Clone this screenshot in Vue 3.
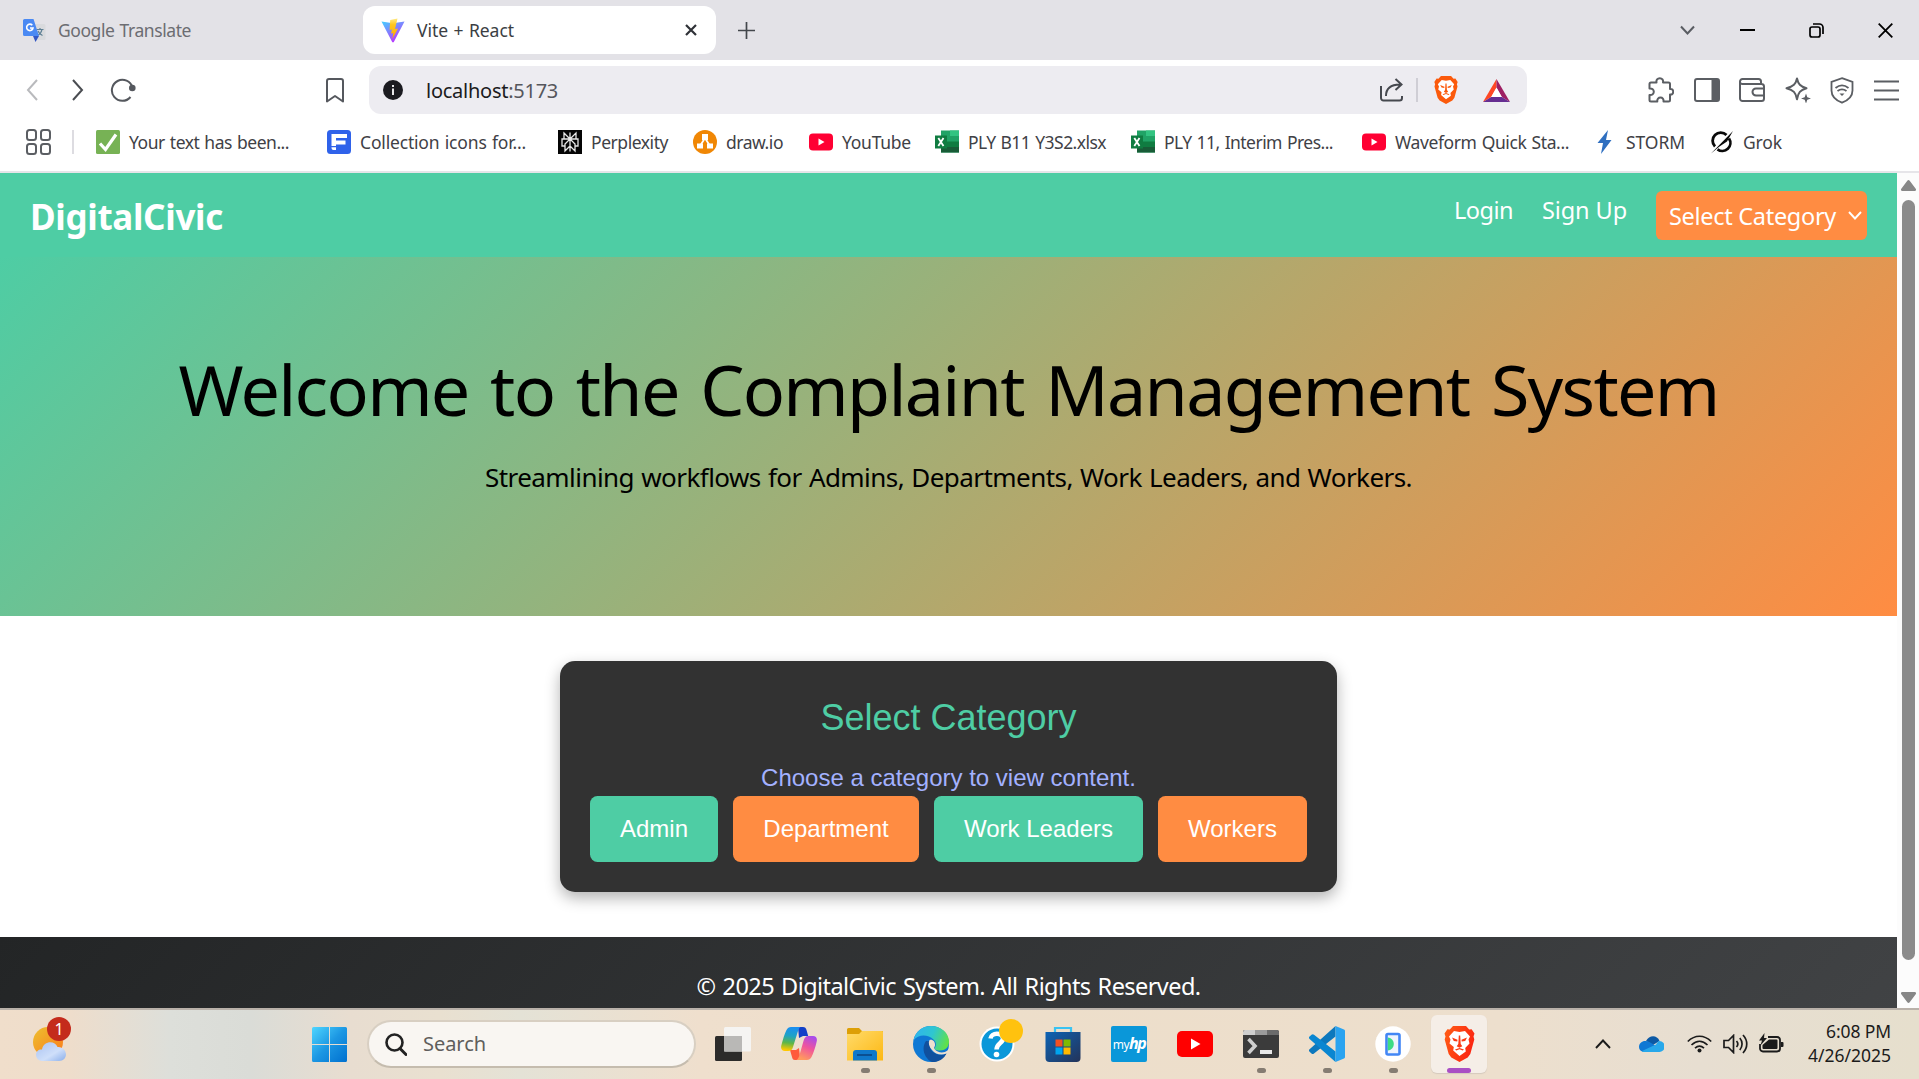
<script setup>
// Tracks a label so that it fills the given width in pixels.
const vFit = {
  mounted(el, { value }) {
    const natural = el.getBoundingClientRect().width
    const count = el.textContent.trim().length
    el.style.letterSpacing = `${(value - natural) / count}px`
  }
}

const bookmarks = [
  { icon: 'check', label: 'Your text has been...', text: 160, slot: 231 },
  { icon: 'flat', label: 'Collection icons for...', text: 166, slot: 231 },
  { icon: 'perplexity', label: 'Perplexity', text: 77, slot: 135 },
  { icon: 'draw', label: 'draw.io', text: 57, slot: 116 },
  { icon: 'youtube', label: 'YouTube', text: 69, slot: 126 },
  { icon: 'excel', label: 'PLY B11 Y3S2.xlsx', text: 138, slot: 196 },
  { icon: 'excel', label: 'PLY 11, Interim Pres...', text: 169, slot: 231 },
  { icon: 'youtube', label: 'Waveform Quick Sta...', text: 174, slot: 231 },
  { icon: 'storm', label: 'STORM', text: 59, slot: 117 },
  { icon: 'grok', label: 'Grok', text: 39, slot: 90 }
]

const categories = [
  { name: 'Admin', tone: 'green', width: 128 },
  { name: 'Department', tone: 'orange', width: 186 },
  { name: 'Work Leaders', tone: 'green', width: 209 },
  { name: 'Workers', tone: 'orange', width: 149 }
]

const apps = [
  { id: 'taskview' },
  { id: 'copilot' },
  { id: 'folder', running: true },
  { id: 'edge', running: true },
  { id: 'help' },
  { id: 'store' },
  { id: 'myhp' },
  { id: 'youtube' },
  { id: 'terminal', running: true },
  { id: 'vscode', running: true },
  { id: 'emulator', running: true },
  { id: 'brave', active: true }
]
</script>

<template>
  <div class="screen">
    <svg class="defs" width="0" height="0" aria-hidden="true">
      <defs>
        <linearGradient id="viteA" x1="0" y1="0" x2="0.6" y2="1">
          <stop offset="0" stop-color="#41d1ff" />
          <stop offset="1" stop-color="#bd34fe" />
        </linearGradient>
        <linearGradient id="viteB" x1="0" y1="0" x2="0" y2="1">
          <stop offset="0" stop-color="#ffea83" />
          <stop offset="0.3" stop-color="#ffc71c" />
          <stop offset="1" stop-color="#ffa800" />
        </linearGradient>
        <linearGradient id="sun" x1="0" y1="0" x2="1" y2="1">
          <stop offset="0" stop-color="#edc02f" />
          <stop offset="1" stop-color="#fb7a1c" />
        </linearGradient>
        <linearGradient id="cloud" x1="0" y1="0" x2="1" y2="1">
          <stop offset="0" stop-color="#a9c2f2" />
          <stop offset="0.6" stop-color="#cfdffa" />
          <stop offset="1" stop-color="#8aaeea" />
        </linearGradient>
        <linearGradient id="win" gradientUnits="userSpaceOnUse" x1="0" y1="0" x2="35" y2="35">
          <stop offset="0" stop-color="#4fd6ff" />
          <stop offset="0.5" stop-color="#1c97e3" />
          <stop offset="1" stop-color="#0070cf" />
        </linearGradient>
        <linearGradient id="copA" x1="0.3" y1="0" x2="0.2" y2="1">
          <stop offset="0" stop-color="#1b8ff0" />
          <stop offset="0.35" stop-color="#1fa3c4" />
          <stop offset="0.65" stop-color="#5fb648" />
          <stop offset="0.95" stop-color="#ffc800" />
        </linearGradient>
        <linearGradient id="copB" x1="0.8" y1="0" x2="0.4" y2="1">
          <stop offset="0" stop-color="#a44bf0" />
          <stop offset="0.5" stop-color="#f0559c" />
          <stop offset="1" stop-color="#ff9a5e" />
        </linearGradient>
        <linearGradient id="fold" x1="0" y1="0" x2="1" y2="1">
          <stop offset="0" stop-color="#ffdb6b" />
          <stop offset="1" stop-color="#fdb813" />
        </linearGradient>
        <linearGradient id="edgeA" x1="0" y1="0.3" x2="1" y2="0.6">
          <stop offset="0" stop-color="#2fb5ee" />
          <stop offset="0.5" stop-color="#2fc6d0" />
          <stop offset="1" stop-color="#62e244" />
        </linearGradient>
        <linearGradient id="storeA" x1="0" y1="0" x2="1" y2="1">
          <stop offset="0" stop-color="#0c63b5" />
          <stop offset="1" stop-color="#243358" />
        </linearGradient>
        <linearGradient id="braveA" x1="0" y1="0.2" x2="1" y2="0.6">
          <stop offset="0" stop-color="#ff5a14" />
          <stop offset="1" stop-color="#fb2313" />
        </linearGradient>
        <symbol id="lion" viewBox="0 0 30 36">
          <path d="M8.5 0h13l3.2 3.6 2.4-.4 2.9 4.4-1 3 .8 3-4 14.4-2.6 3.6L15 36l-8.2-4.4L4.200 28 .2 13.600 1 10.600l-1-3 2.900-4.400 2.400.4z" />
          <path fill="#fff" d="M9.500 5 15 6l5.500-1 5 5.500-1.500 3 1 4-4.300 4.500.6 3.500L15 30l-6.300-5.500.6-3.500L5 17.500l1-4-1.500-3z" />
          <path fill="currentColor" d="M7.500 11.500l5.500 2.200-.2 1.800-3.500-.6zM22.500 11.500 17 13.700l.2 1.800 3.500-.6zM14.300 9.500h1.400l.5 8.500 1.600 2.300-2.800 1.500-2.800-1.500 1.600-2.300zM10.500 23.500l4.500-1.600 4.500 1.600-1.300 1L15 23.300l-3.200 1.200z" />
        </symbol>
        <symbol id="yt" viewBox="0 0 36 26">
          <rect width="36" height="26" rx="5" />
          <path fill="#fff" d="M14 7.500v11l9.500-5.500z" />
        </symbol>
      </defs>
    </svg>

    <header class="browser">
      <div class="tabs">
        <div class="tab idle">
          <svg width="23" height="24" viewBox="0 0 23 24">
            <path fill="#d9dadd" d="M9 6h12a1.500 1.500 0 0 1 1.500 1.500v13A1.500 1.500 0 0 1 21 22h-8z" />
            <path d="M13.500 11.500h7M17 10v1.500M19 11.500c-.6 3-2.500 5-4.500 6M15 13c.8 2 2.400 3.500 4.500 4.500" fill="none" stroke="#5e7f94" stroke-width="1.200" />
            <path fill="#3357c4" d="M10 18h6l-3.500 6z" />
            <path fill="#4a89f3" d="M1.500 1h9L16 18H1.500A1.500 1.500 0 0 1 0 16.500v-14A1.500 1.500 0 0 1 1.500 1z" />
            <path fill="none" stroke="#fff" stroke-width="1.600" d="M9.300 7.300A3.200 3.200 0 1 0 10 10H7" />
          </svg>
          <span v-fit="133" class="t18">Google Translate</span>
        </div>
        <div class="tab open">
          <svg width="24" height="25" viewBox="0 0 24 25">
            <path fill="url(#viteA)" d="M.5 3.500 12 5.300l11.500-1.800L12.700 24.300h-1.400z" />
            <path fill="url(#viteB)" d="M16.500.5 9.200 2 8.600 12l2.300-.5-.8 4 2.200-.6-1 6 5.700-10.500-3 .5z" />
          </svg>
          <span v-fit="97" class="t18">Vite + React</span>
          <svg class="close" width="12" height="12" viewBox="0 0 12 12"><path d="M1 1l10 10M11 1 1 11" stroke="#2f3237" stroke-width="2.200" /></svg>
        </div>
        <svg class="plus" width="17" height="17" viewBox="0 0 17 17"><path d="M8.500 0v17M0 8.500h17" stroke="#43474c" stroke-width="1.700" /></svg>
        <div class="window-keys">
          <svg width="15" height="10" viewBox="0 0 15 10"><path d="M1 1.500l6.500 7 6.500-7" fill="none" stroke="#5a5d63" stroke-width="2" /></svg>
          <svg width="15" height="15" viewBox="0 0 15 15"><path d="M0 7h15" stroke="#000" stroke-width="2" /></svg>
          <svg width="15" height="15" viewBox="0 0 15 15" fill="none" stroke="#000" stroke-width="1.700"><rect x="1" y="4" width="10" height="10" rx="2" /><path d="M4 1h6.500A3.500 3.500 0 0 1 14 4.500V11" /></svg>
          <svg width="15" height="15" viewBox="0 0 15 15"><path d="M.7.7l13.600 13.600M14.300.7.7 14.300" stroke="#000" stroke-width="1.800" /></svg>
        </div>
      </div>

      <div class="toolbar">
        <div class="history">
          <svg width="12" height="22" viewBox="0 0 12 22"><path d="M11 1 2 11l9 10" fill="none" stroke="#b9babd" stroke-width="2" /></svg>
          <svg width="12" height="22" viewBox="0 0 12 22"><path d="M1 1l9 10-9 10" fill="none" stroke="#4a4d52" stroke-width="2" /></svg>
          <svg width="26" height="24" viewBox="0 0 26 24"><path d="M22.500 9.500A10.500 10.500 0 1 0 20.500 19" fill="none" stroke="#55585e" stroke-width="2" /><circle cx="22.300" cy="10" r="3.300" fill="#55585e" /></svg>
        </div>
        <svg class="mark" width="18" height="25" viewBox="0 0 18 25"><path d="M3 1h12a2 2 0 0 1 2 2v20.500l-8-5.500-8 5.500V3a2 2 0 0 1 2-2z" fill="none" stroke="#55585e" stroke-width="2" stroke-linejoin="round" /></svg>
        <div class="address">
          <svg width="20" height="20" viewBox="0 0 20 20"><circle cx="10" cy="10" r="10" fill="#1b1b20" /><path d="M10 8.500V15M10 5v2" stroke="#fff" stroke-width="1.800" /></svg>
          <span v-fit="132" class="url">localhost<i>:5173</i></span>
          <svg class="share" width="23" height="24" viewBox="0 0 23 24" fill="none" stroke="#45484e" stroke-width="2"><path d="M1 8v12a2.500 2.500 0 0 0 2.500 2.500h16A2.500 2.500 0 0 0 22 20v-2M6 18c0-7 4-11.500 14-11.500M15.500 1l6 5.500-6 5.500" /></svg>
          <span class="bar"></span>
          <svg class="lion" width="24" height="28" fill="#fb5a0c"><use href="#lion" /></svg>
          <svg width="27" height="23" viewBox="0 0 27 23"><path fill="#ff4724" d="M13.500 0 0 23l8.200-5L13.500 8.500z" /><path fill="#9e1f63" d="M13.500 0 27 23l-8.200-5-5.300-9.500z" /><path fill="#662d91" d="M0 23h27l-8.200-5H8.200z" /><path fill="#fff" d="M13.500 8.500 8.200 18h10.600z" /></svg>
        </div>
        <div class="tools">
          <svg width="26" height="26" viewBox="0 0 26 26" fill="none" stroke="#5b5e63" stroke-width="2" stroke-linejoin="round"><path d="M3 5.500h5.500C8 3 9.500 1.200 11.800 1.200S15.500 3 15 5.500h5.500a1.500 1.500 0 0 1 1.500 1.500v5c2-.4 3.200 1 3.200 2.800S24 18 22 17.500V23a1.500 1.500 0 0 1-1.500 1.500h-5c.3-2.500-1-4-3-4s-3.500 1.500-3.200 4H3A1.500 1.500 0 0 1 1.500 23v-5c2.800.3 4.300-1.300 4.300-3.300s-1.500-3.500-4.300-3.200V7A1.500 1.500 0 0 1 3 5.500z" /></svg>
          <svg width="26" height="24" viewBox="0 0 26 24"><rect x="1" y="1" width="24" height="22" rx="2" fill="none" stroke="#5b5e63" stroke-width="2" /><path fill="#5b5e63" d="M17.500 1H25v22h-7.500z" /></svg>
          <svg width="26" height="24" viewBox="0 0 26 24" fill="none" stroke="#5b5e63" stroke-width="2"><path d="M22 6V3.500A2.500 2.500 0 0 0 19.500 1h-16A2.500 2.500 0 0 0 1 3.500v17A2.500 2.500 0 0 0 3.500 23h19a2.500 2.500 0 0 0 2.500-2.500v-12A2.500 2.500 0 0 0 22.500 6H3.500A2.300 2.300 0 0 1 1 3.800M25 10.500h-8a3.500 3.500 0 0 0 0 7h8" /></svg>
          <svg width="26" height="26" viewBox="0 0 26 26"><path d="M12 1.500c1.200 5.500 3.200 7.800 9.500 9.700-6.300 1.900-8.300 4.300-9.500 11-1.200-6.700-3.500-9.100-10.500-11C8.500 9.300 10.800 7 12 1.500z" fill="none" stroke="#5b5e63" stroke-width="2" stroke-linejoin="round" /><path fill="#5b5e63" d="M21 16.500l1.300 3.700L26 21.500l-3.700 1.300L21 26.500l-1.300-3.700-3.700-1.300 3.700-1.300z" /></svg>
          <svg width="24" height="27" viewBox="0 0 24 27" fill="none" stroke="#5b5e63" stroke-width="1.800"><path d="M12 1.200 22.500 5v8.500c0 5.500-4 9.700-10.500 12.200C5.500 23.200 1.500 19 1.500 13.500V5z" /><path d="M5.500 11c4-3.300 9-3.300 13 0M7.500 14c3-2.200 6-2.200 9 0" /><path d="M9.500 16.500h5L12 19z" fill="#5b5e63" stroke="none" /></svg>
          <svg width="25" height="21" viewBox="0 0 25 21"><path d="M0 1.500h25M0 10.500h25M0 19.500h25" stroke="#5b5e63" stroke-width="2" /></svg>
        </div>
      </div>

      <div class="bookmarks">
        <svg class="grid" width="25" height="26" viewBox="0 0 25 26" fill="none" stroke="#5b5e63" stroke-width="2"><rect x="1" y="1" width="9" height="10" rx="2.500" /><rect x="15" y="1" width="9" height="10" rx="2.500" /><rect x="1" y="15" width="9" height="10" rx="2.500" /><rect x="15" y="15" width="9" height="10" rx="2.500" /></svg>
        <span class="bar"></span>
        <div v-for="b in bookmarks" :key="b.label" class="bookmark" :style="{ width: b.slot + 'px' }">
          <svg width="24" height="24" viewBox="0 0 24 24">
            <template v-if="b.icon === 'check'"><rect width="24" height="24" rx="1.500" fill="#77b255" /><path d="M4 13.500l5.500 6L20 4.500" fill="none" stroke="#fff" stroke-width="3.200" /></template>
            <template v-else-if="b.icon === 'flat'"><rect width="24" height="24" rx="3.500" fill="#2f62ea" /><path fill="#fff" d="M4.500 4H20v4H9v2.500h9.500v4H9V16H4.500zM4.500 17.300H9v2.700H6.500a2 2 0 0 1-2-2z" /></template>
            <template v-else-if="b.icon === 'perplexity'"><rect width="24" height="24" fill="#050505" /><path d="M12 2.500v19M6 3l6 6 6-6v6H6zM6 9H4v7h3M18 9h2v7h-3M12 9l-5 5v7l5-5 5 5v-7z" fill="none" stroke="#e8e8e8" stroke-width="1.300" /></template>
            <template v-else-if="b.icon === 'draw'"><circle cx="12" cy="12" r="12" fill="#f08705" /><path d="M12 8l-5 8M12 8l5 8" stroke="#fff" stroke-width="1.800" /><path fill="#fff" d="M9 4h6v6H9zM4 13.500h6v5H4zM14 13.500h6v5h-6z" /></template>
            <template v-else-if="b.icon === 'youtube'"><rect y="3.500" width="24" height="17" rx="4" fill="#ff0033" /><path fill="#fff" d="M9.500 8.500v7l6-3.500z" /></template>
            <template v-else-if="b.icon === 'excel'"><path fill="#21a366" d="M6 .5h18v22H6z" /><path fill="#33c481" d="M15 .5h9V6h-9z" /><path fill="#107c41" d="M6 11.500h18V17H6z" /><path fill="#185c37" d="M6 17h18v5.500H6z" /><path fill="#107c41" d="M0 5.500h12v13H0z" /><path d="M3.300 8l5.200 8M8.500 8l-5.200 8" stroke="#fff" stroke-width="1.800" /></template>
            <template v-else-if="b.icon === 'storm'"><path fill="#2f6fc0" d="M15 0 4.500 13H10L8 24l10.500-14H13z" /></template>
            <template v-else><path d="M16.500 5A8 8 0 0 0 5 16.500M19 8.500A8 8 0 0 1 7.500 19.300" fill="none" stroke="#0a0a0a" stroke-width="2.800" /><path d="M1 23.500 23 1l-6 10.500-7.500 5z" fill="#0a0a0a" /></template>
          </svg>
          <span v-fit="b.text" class="t18">{{ b.label }}</span>
        </div>
      </div>
    </header>

    <div class="viewport">
      <main class="page">
        <nav class="nav">
          <strong v-fit="193" class="logo">DigitalCivic</strong>
          <div class="links">
            <a v-fit="59">Login</a>
            <a v-fit="85">Sign Up</a>
            <div class="select">
              <span v-fit="167">Select Category</span>
              <svg width="14" height="9" viewBox="0 0 14 9"><path d="M1 1l6 6.500L13 1" fill="none" stroke="#fff" stroke-width="1.900" /></svg>
            </div>
          </div>
        </nav>
        <section class="hero">
          <h1><span v-fit="1540">Welcome to the Complaint Management System</span></h1>
          <p><span v-fit="927">Streamlining workflows for Admins, Departments, Work Leaders, and Workers.</span></p>
        </section>
        <section class="body">
          <div class="card">
            <h2>Select Category</h2>
            <p>Choose a category to view content.</p>
            <div class="choices">
              <button v-for="c in categories" :key="c.name" :class="c.tone" :style="{ width: c.width + 'px' }">{{ c.name }}</button>
            </div>
          </div>
        </section>
        <footer class="foot"><span v-fit="504">© 2025 DigitalCivic System. All Rights Reserved.</span></footer>
      </main>
      <aside class="scroll">
        <svg width="15" height="11" viewBox="0 0 15 11"><path fill="#878787" d="M6.300.8a1.500 1.500 0 0 1 2.400 0l6 8A1.300 1.300 0 0 1 13.700 11H1.300A1.300 1.300 0 0 1 .3 8.800z" /></svg>
        <div class="thumb"></div>
        <svg width="15" height="11" viewBox="0 0 15 11"><path fill="#878787" d="M6.300 10.200a1.500 1.500 0 0 0 2.400 0l6-8A1.300 1.300 0 0 0 13.700 0H1.300A1.300 1.300 0 0 0 .3 2.200z" /></svg>
      </aside>
    </div>

    <div class="taskbar">
      <div class="weather">
        <svg width="34" height="34" viewBox="0 0 34 34"><circle cx="15" cy="15" r="15" fill="url(#sun)" /><path fill="url(#cloud)" d="M9 34a6 6 0 0 1-6-6c0-4 3-6 6-5.500 1.500-9 13-9.500 15.500-2.500A7.500 7.500 0 0 1 33 27c0 4-2.500 7-7 7z" /></svg>
        <span class="badge">1</span>
      </div>
      <svg class="start" width="35" height="35" viewBox="0 0 35 35"><path fill="url(#win)" d="M1.500 0H17v17H0V1.500A1.500 1.500 0 0 1 1.500 0zM18 0h15.500A1.500 1.500 0 0 1 35 1.500V17H18zM0 18h17v17H1.500A1.500 1.500 0 0 1 0 33.500zM18 18h17v15.500a1.500 1.500 0 0 1-1.500 1.500H18z" /></svg>
      <div class="search">
        <svg width="22" height="23" viewBox="0 0 22 23"><circle cx="9.500" cy="9.500" r="8" fill="none" stroke="#222" stroke-width="2.600" /><path d="M15 15.500l6 6" stroke="#222" stroke-width="3" stroke-linecap="round" /></svg>
        <span v-fit="63">Search</span>
      </div>
      <div class="apps">
        <div v-for="a in apps" :key="a.id" class="app" :class="{ active: a.active }">
          <svg v-if="a.id === 'taskview'" width="36" height="36" viewBox="0 0 36 36"><rect y="10" width="27" height="25" rx="1.500" fill="#2c2b2a" /><rect x="9" y="1" width="27" height="24.500" rx="1.500" fill="#f5f4f2" /><path fill="#b9b8b6" d="M9 10h18v15.500H9z" /></svg>
          <svg v-else-if="a.id === 'copilot'" width="36" height="36" viewBox="0 0 36 36"><path fill="#1240c8" d="M17 1h5c2 0 3 1 3.500 3l1.700 6H22l-4 2z" /><path fill="#ff5a3c" d="M9 24h6l3-2 1 9-2 3h-3c-2 0-2.500-1-3-3z" /><path fill="url(#copA)" d="M10 1h9.500c-1.500 1-2 2.500-2.500 4l-5 16c-.7 2.500-2 4-5 4H4c-3 0-4.500-2-3.700-5.500C2 13 3.500 8 5.500 4 6.500 2 8 1 10 1z" /><path fill="url(#copB)" d="M26 34H15.500c1.500-1 2.200-2.500 2.700-4l4.300-15c.8-3 2-5 5-5H32c3 0 4.500 2 3.700 5.500C34.500 21 32.500 27 30.500 31c-1 2-2.500 3-4.500 3z" /></svg>
          <svg v-else-if="a.id === 'folder'" width="36" height="36" viewBox="0 0 36 36"><path fill="#dd9f06" d="M1.500 2H12l3 3h21v6H0V3.500A1.500 1.500 0 0 1 1.500 2z" /><path fill="url(#fold)" d="M0 8h12l3-3h20a1 1 0 0 1 1 1v28.500H0z" /><path fill="#0f78cb" d="M6 34.500V27a3 3 0 0 1 3-3h18a3 3 0 0 1 3 3v7.500z" /><path d="M10 29h15" stroke="#0b4f92" stroke-width="2" /></svg>
          <svg v-else-if="a.id === 'edge'" width="36" height="36" viewBox="0 0 36 36"><circle cx="18" cy="18" r="18" fill="#0f78d4" /><path fill="url(#edgeA)" d="M.5 14.500C2 6 9 0 18 0c10 0 18 7 18 15.500 0 6-4 9-9 9-4 0-6-1.500-5.500-2.500 2-2 2-6-1-8.500C15 8 5 8 .5 14.500z" /><path fill="#10509e" d="M13 15c-5 7-2 17 6 21 7 .5 12-3.500 14.500-8.500-6 3-13 .5-15.500-4-1.500-2.500-1.500-5 0-8z" /><path fill="#eee0d0" d="M16.500 14c3-1 6 1.500 5.500 5.500-.3 1.500-1.500 2.200-.5 3.500 3 4 9.500 4.500 13 1.500l1.500-1.500v3l-2.500 1.500c-5 2-11 1-14.500-3.500-3-3.500-4-7-2.500-10z" /></svg>
          <svg v-else-if="a.id === 'help'" width="36" height="36" viewBox="0 0 36 36" overflow="visible"><circle cx="18" cy="18" r="17.500" fill="#fff" /><circle cx="18" cy="18" r="15.500" fill="#0a97d9" /><path d="M11.500 12.500C12 6.500 23.500 6 24 12.500c.2 4.500-6.500 4.500-6.500 11" fill="none" stroke="#fff" stroke-width="4.500" /><circle cx="17.500" cy="28.500" r="2.800" fill="#fff" /><circle cx="32" cy="5" r="12" fill="#ffc20e" /></svg>
          <svg v-else-if="a.id === 'store'" width="36" height="36" viewBox="0 0 36 36"><path d="M10 9V2h16v7" fill="none" stroke="#39c3f2" stroke-width="2.200" /><path fill="url(#storeA)" d="M.5 6h35v26a4 4 0 0 1-4 4h-27a4 4 0 0 1-4-4z" /><path fill="#f25022" d="M10.500 13.500h7v7h-7z" /><path fill="#7fba00" d="M18.500 13.500h7v7h-7z" /><path fill="#00a4ef" d="M10.500 21.500h7v7h-7z" /><path fill="#ffb900" d="M18.500 21.500h7v7h-7z" /></svg>
          <div v-else-if="a.id === 'myhp'" class="myhp">my<b>hp</b></div>
          <svg v-else-if="a.id === 'youtube'" width="36" height="26" fill="#ff0000"><use href="#yt" /></svg>
          <svg v-else-if="a.id === 'terminal'" width="36" height="28" viewBox="0 0 36 28"><rect width="36" height="28" rx="2" fill="#3b3b3b" /><path fill="#cfcfcf" d="M1.500 0H12v5H0V1.500z" /><path fill="#9b9b9b" d="M12 0h12v5H12z" /><path fill="#6b6b6b" d="M24 0h10.500L36 1.500V5H24z" /><path d="M5.500 9l6.500 7-6.500 7" fill="none" stroke="#cfcfcf" stroke-width="3.600" /><path d="M17 22h12" stroke="#e8e8e8" stroke-width="4" /></svg>
          <svg v-else-if="a.id === 'vscode'" width="36" height="36" viewBox="0 0 36 36"><path fill="#0d78bd" d="M26.500 0v10.500L5 27.500a2 2 0 0 1-2.500 0L.6 25.700a1.500 1.500 0 0 1 0-2.400z" /><path fill="#0a86d1" d="M26.500 36V25.500L5 8.800a2 2 0 0 0-2.500 0L.6 10.500a1.500 1.500 0 0 0 0 2.400z" /><path fill="#2aa3f0" d="M26.500 0 35 3.500a2 2 0 0 1 1 2v25a2 2 0 0 1-1 2L26.500 36z" /></svg>
          <svg v-else-if="a.id === 'emulator'" width="36" height="36" viewBox="0 0 36 36"><circle cx="18" cy="18" r="17.700" fill="#fff" /><rect x="11.500" y="8" width="13" height="20.500" rx="1.500" fill="#eef3fd" stroke="#4286f5" stroke-width="2.600" /><path fill="#3ddc84" d="M12.800 11.500c8 1 8 12 0 13z" /></svg>
          <svg v-else width="31" height="36" class="lion" fill="url(#braveA)"><use href="#lion" /></svg>
          <span v-if="a.running || a.active" class="dot"></span>
        </div>
      </div>
      <div class="tray">
        <svg width="16" height="10" viewBox="0 0 16 10"><path d="M1 9l7-7.500L15 9" fill="none" stroke="#1b1b1b" stroke-width="1.900" /></svg>
        <svg width="25" height="16" viewBox="0 0 25 16"><path fill="#0c59a4" d="M7 5c3-6 11-6.500 13.500 0L14 9z" /><path fill="#0f78d4" d="M5 16a5 5 0 0 1-5-5c0-4 3.500-6.500 7-6 3 .3 6 2.500 10 5l-5 6z" /><path fill="#28a8ea" d="M3 15 17 8.500c1-1.500 2-3.500 3.500-3.500A5.500 5.500 0 0 1 20 16H5c-1 0-1.600-.3-2-1z" /></svg>
        <svg width="25" height="18" viewBox="0 0 25 18" fill="none" stroke="#1b1b1b" stroke-width="1.700"><path d="M.8 6.500c7-7 16.400-7 23.400 0M4.500 10c5-4.800 11-4.800 16 0M8 13.200c2.800-2.600 6.200-2.600 9 0" /><circle cx="12.500" cy="15.500" r="2" fill="#1b1b1b" stroke="none" /></svg>
        <svg width="25" height="20" viewBox="0 0 25 20" fill="none" stroke="#1b1b1b" stroke-width="1.700"><path d="M1 6.500h4.500l5-5v17l-5-5H1zM13.500 7c1.600 1.800 1.600 4.200 0 6M16.800 4c3 3.500 3 8.500 0 12M20 1c5 5.500 5 12.500 0 18" /></svg>
        <svg width="25" height="20" viewBox="0 0 25 20"><path d="M9 4h9a3 3 0 0 1 3 3v8.500a3 3 0 0 1-3 3H4a3 3 0 0 1-3-3V11" fill="none" stroke="#1b1b1b" stroke-width="1.800" /><path fill="#1b1b1b" d="M10 6.500h7.500a1 1 0 0 1 1 1V15a1 1 0 0 1-1 1H4.500a1 1 0 0 1-1-1v-3zM22 9h1.500a1 1 0 0 1 1 1v3a1 1 0 0 1-1 1H22zM5.500 0 0 7.500h3L1.500 12.500 8 5H5z" /></svg>
      </div>
      <div class="clock">
        <span v-fit="65">6:08 PM</span>
        <span v-fit="83">4/26/2025</span>
      </div>
    </div>
  </div>
</template>

<style>
html,
body {
  margin: 0;
  overflow: hidden;
}
</style>

<style scoped>
.screen {
  display: flex;
  flex-direction: column;
  width: 1919px;
  height: 1079px;
  overflow: hidden;
  background: #fff;
  font-family: "Noto Sans", "Open Sans", sans-serif;
}
.screen * { box-sizing: border-box; }
.defs { position: absolute; }
svg { display: block; flex: none; }
span, a, strong { white-space: nowrap; }
.t18 { font-size: 17.500px; line-height: 24px; word-spacing: 1px; }

.browser {
  flex: none;
  height: 173px;
  border-bottom: 2px solid #e6e5e9;
  background: #fff;
}
.tabs {
  display: flex;
  align-items: center;
  height: 60px;
  background: #e3e2e7;
}
.tab { display: flex; align-items: center; height: 48px; }
.tab .t18 { margin-bottom: 1px; }
.idle { width: 340px; margin-left: 23px; gap: 12px; color: #6c6d72; }
.open {
  width: 353px;
  padding: 0 19px 0 18px;
  gap: 12px;
  border-radius: 12px;
  background: #fff;
  color: #3b3e43;
}
.close { margin-left: auto; }
.plus { margin-left: 22px; }
.window-keys {
  display: flex;
  align-items: center;
  margin-left: auto;
  margin-right: 26px;
}
.window-keys svg + svg { margin-left: 54px; }
.window-keys svg:nth-child(2) { margin-left: 45px; }

.toolbar { display: flex; align-items: center; height: 60px; }
.history { display: flex; align-items: center; width: 299px; padding-left: 26px; }
.history svg:nth-child(2) { margin-left: 34px; }
.history svg:nth-child(3) { margin-left: 26px; }
.mark { margin-left: 27px; }
.address {
  display: flex;
  align-items: center;
  width: 1158px;
  height: 48px;
  margin-left: 25px;
  padding: 0 17px 0 14px;
  border-radius: 12px;
  background: #edecf1;
}
.url { margin: 1px 0 0 23px; font-size: 20px; line-height: 28px; color: #1b1b20; }
.url i { font-style: normal; color: #55565c; }
.share { margin-left: auto; }
.bar { width: 2px; height: 24px; background: #cfced5; }
.address .bar { margin: 0 16px 0 13px; }
.address .lion { margin-right: 25px; color: #fb5a0c; }
.tools { display: flex; align-items: center; margin-left: 121px; gap: 19.500px; }

.bookmarks { display: flex; align-items: center; height: 46px; padding: 0 0 0 26px; margin-top: -1px; }
.bookmarks > .bar { margin: 0 22px 0 21px; background: #dddce1; }
.bookmark { display: flex; align-items: center; flex: none; gap: 9px; color: #3f4146; }

.viewport { display: flex; flex: none; height: 835px; overflow: hidden; }
.page { width: 1897px; }
.nav {
  display: flex;
  align-items: center;
  justify-content: space-between;
  height: 84px;
  padding: 0 30px;
  background: #4ecda4;
  color: #fff;
}
.logo { margin-top: 4px; font-size: 35px; line-height: 54px; }
.links { display: flex; align-items: center; font-size: 23.500px; line-height: 36px; }
.links a { margin: 0 29px 11px 0; }
.links a:nth-child(2) { margin-right: 29px; }
.select {
  display: flex;
  align-items: center;
  justify-content: space-between;
  width: 211px;
  height: 49px;
  padding: 0 5px 0 13px;
  border-radius: 6px;
  background: #ff8c42;
}
.select span { margin-top: 2px; }
.hero {
  height: 359px;
  padding-top: 78px;
  background: linear-gradient(135deg, #4ecda4, #ff8c42);
  color: #000;
  text-align: center;
}
.hero h1 { margin: 0; font-size: 70px; font-weight: 400; line-height: 108px; word-spacing: 5px; }
.hero p { margin: 14px 0 0; font-size: 26px; line-height: 40px; word-spacing: 1px; }
.hero span, .foot span { display: inline-block; }
.body { height: 321px; padding-top: 45px; }
.card {
  width: 777px;
  height: 231px;
  margin: 0 auto;
  padding: 36px 30px 0;
  border-radius: 15px;
  background: #323232;
  box-shadow: 0 6px 15px rgba(0, 0, 0, 0.3);
  font-family: "Liberation Sans", Arial, sans-serif;
  text-align: center;
}
.card h2 { margin: 0; font-size: 36px; font-weight: 400; line-height: 42px; color: #4ecda4; }
.card p { margin: 21px 0 0; font-size: 24px; line-height: 36px; color: #a3b1ff; }
.choices { display: flex; gap: 15px; }
.choices button {
  height: 66px;
  padding: 0;
  border: 0;
  border-radius: 7.500px;
  color: #fff;
  font: 24px/36px "Liberation Sans", Arial, sans-serif;
}
.green { background: #4ecda4; }
.orange { background: #ff8c42; }
.foot {
  height: 98px;
  padding-top: 31px;
  background: linear-gradient(135deg, #232526, #414345);
  color: #fff;
  font-size: 23.500px;
  line-height: 36px;
  text-align: center;
  word-spacing: 1.500px;
}
.scroll {
  display: flex;
  flex-direction: column;
  align-items: center;
  width: 22px;
  padding: 7px 0 0 1px;
  background: #fcfcfc;
}
.thumb { width: 13px; height: 760px; margin: 9px 0 32px; border-radius: 7px; background: #8b8b8b; }

.taskbar {
  display: flex;
  align-items: center;
  flex: none;
  height: 71px;
  padding-bottom: 1px;
  border-top: 2px solid #b9b1a9;
  background: linear-gradient(90deg, #f0decb 0, #eeddcb 70px, #dddfda 170px, #dadcd7 250px, #e8ddd0 350px, #e9e0d0 440px, #e4e2d6 520px, #efdfcd 700px, #eddeca 1000px, #eddfcd 1500px, #e7ded1 1700px, #e6dfcd 1919px);
}
.weather { position: relative; margin-left: 33px; }
.badge {
  position: absolute;
  top: -10px;
  left: 14px;
  width: 24px;
  height: 24px;
  border-radius: 50%;
  background: #c42b1c;
  color: #fff;
  font-size: 16px;
  line-height: 24px;
  text-align: center;
}
.start { margin-left: 245px; }
.search {
  display: flex;
  align-items: center;
  gap: 16px;
  width: 329px;
  height: 48px;
  margin-left: 20px;
  padding-left: 16px;
  border: 2px solid #d8cfc2;
  border-bottom-color: #c5bcae;
  border-radius: 24px;
  background: #f9f6f2;
  color: #605e5c;
  font-size: 20px;
  line-height: 28px;
}
.apps { display: flex; margin-left: 9px; gap: 10px; }
.app {
  position: relative;
  display: flex;
  align-items: center;
  justify-content: center;
  width: 56px;
  height: 58px;
  border-radius: 6px;
}
.app.active { background: #f5eee7; box-shadow: 0 1px 1px #d5cabd; }
.app .lion { color: #fb3a14; }
.dot {
  position: absolute;
  bottom: 0;
  left: 24px;
  width: 9px;
  height: 5px;
  border-radius: 3px;
  background: #857c72;
}
.active .dot { left: 16px; width: 24px; background: #a94fc4; }
.myhp {
  width: 36px;
  height: 36px;
  border-radius: 2px;
  background: #0a97d9;
  color: #fff;
  font-size: 12px;
  line-height: 35px;
  letter-spacing: -0.500px;
  text-align: center;
}
.myhp b { font-size: 16px; font-style: italic; letter-spacing: -1.500px; }
.tray { display: flex; align-items: center; margin-left: 108px; }
.tray svg:nth-child(2) { margin-left: 28px; }
.tray svg:nth-child(3) { margin-left: 23px; }
.tray svg:nth-child(4), .tray svg:nth-child(5) { margin-left: 11px; }
.tray svg:nth-child(5) { margin-bottom: 3px; }
.clock {
  display: flex;
  flex-direction: column;
  align-items: flex-end;
  margin: 0 28px 2px auto;
  color: #1b1b1b;
  font-size: 17.500px;
  line-height: 24px;
}
</style>
